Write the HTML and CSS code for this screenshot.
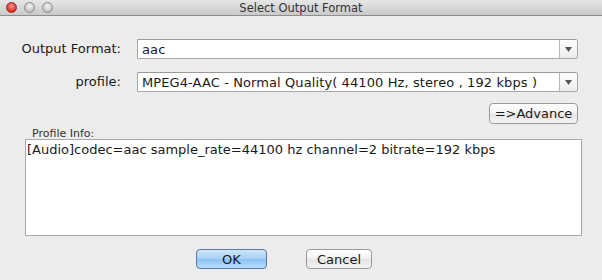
FILE: index.html
```html
<!DOCTYPE html>
<html>
<head>
<meta charset="utf-8">
<link rel="stylesheet" href="styles.css">
</head>
<body>
<div class="window">
  <div class="titlebar">
    <div class="lights">
      <span class="light red"></span>
      <span class="light grey"></span>
      <span class="light grey"></span>
    </div>
    <div class="title">Select Output Format</div>
  </div>
  <div class="content">
    <div class="form">
      <label class="label">Output Format:</label>
      <div class="combo"><span class="combo-text">aac</span><span class="combo-btn"><svg width="7" height="5" viewBox="0 0 7 5"><path d="M0 0 L7 0 L3.5 5 Z" fill="#555"/></svg></span></div>
      <label class="label">profile:</label>
      <div class="combo"><span class="combo-text">MPEG4-AAC - Normal Quality( 44100 Hz, stereo , 192 kbps )</span><span class="combo-btn"><svg width="7" height="5" viewBox="0 0 7 5"><path d="M0 0 L7 0 L3.5 5 Z" fill="#555"/></svg></span></div>
    </div>
    <div class="advance-row"><button class="btn advance">=&gt;Advance</button></div>
    <div class="info-label">Profile Info:</div>
    <div class="info">[Audio]codec=aac sample_rate=44100 hz channel=2 bitrate=192 kbps</div>
    <div class="actions">
      <button class="btn ok">OK</button>
      <button class="btn cancel">Cancel</button>
    </div>
  </div>
</div>
</body>
</html>
```
FILE: styles.css
```css
html, body {
  margin: 0;
  padding: 0;
}
body {
  width: 602px;
  height: 280px;
  overflow: hidden;
  background: #ececec;
  font-family: "DejaVu Sans", "Liberation Sans", sans-serif;
  color: #1a1a1a;
}
.window {
  width: 602px;
  height: 280px;
  display: flex;
  flex-direction: column;
}
.titlebar {
  height: 15px;
  border-bottom: 1px solid #8e8e8e;
  background: linear-gradient(#e6e6e6, #c9c9c9);
  display: flex;
  align-items: center;
  position: relative;
}
.lights {
  display: flex;
  gap: 7px;
  padding-left: 6px;
}
.light {
  width: 11px;
  height: 11px;
  border-radius: 50%;
  box-sizing: border-box;
}
.light.red {
  background: radial-gradient(circle at 50% 35%, #ff9a94, #e0302a 65%, #b01a16);
  border: 1px solid #9a2a24;
}
.light.grey {
  background: radial-gradient(circle at 50% 35%, #f4f4f4, #c8c8c8 65%, #a8a8a8);
  border: 1px solid #8a8a8a;
}
.title {
  position: absolute;
  left: 0;
  right: 0;
  top: 1px;
  text-align: center;
  font-size: 11.5px;
  color: #333;
}
.content {
  padding-top: 23px;
  display: flex;
  flex-direction: column;
}
.form {
  display: grid;
  grid-template-columns: 121px 1fr;
  column-gap: 16px;
  row-gap: 13px;
  padding-right: 24px;
}
.label {
  text-align: right;
  font-size: 13px;
  line-height: 20px;
  color: #1a1a1a;
}
.combo {
  height: 20px;
  box-sizing: border-box;
  border: 1px solid #a8a8a8;
  border-top-color: #9a9a9a;
  background: #fff;
  display: flex;
  align-items: center;
  border-radius: 1px 3px 3px 1px;
}
.combo-text {
  flex: 1;
  padding-left: 4px;
  font-size: 13px;
  letter-spacing: 0.1px;
  white-space: nowrap;
  overflow: hidden;
}
.combo-btn {
  width: 17px;
  height: 100%;
  border-left: 1px solid #b8b8b8;
  background: linear-gradient(#ffffff, #ececec);
  display: flex;
  align-items: center;
  justify-content: center;
  border-radius: 0 3px 3px 0;
}
.advance-row {
  display: flex;
  justify-content: flex-end;
  padding-right: 24px;
  margin-top: 11px;
}
.btn {
  font-family: "DejaVu Sans", "Liberation Sans", sans-serif;
  font-size: 13px;
  color: #1a1a1a;
  border: 1px solid #9a9a9a;
  border-radius: 4px;
  background: linear-gradient(#ffffff, #f2f2f2 50%, #e4e4e4 51%, #f4f4f4);
  padding: 0;
  box-sizing: border-box;
  height: 21px;
}
.advance {
  width: 89px;
}
.info-label {
  margin-top: 4px;
  padding-left: 32px;
  font-size: 11px;
  line-height: 11px;
  color: #333;
}
.info {
  margin: 0 20px 0 25px;
  height: 97px;
  box-sizing: border-box;
  border: 1px solid #a9a9a9;
  background: #fff;
  font-size: 13px;
  padding: 2px 1px;
  white-space: nowrap;
}
.actions {
  display: flex;
  gap: 39px;
  padding-left: 196px;
  margin-top: 13px;
}
.ok {
  width: 71px;
  height: 20px;
  border-color: #5b78a0;
  background: linear-gradient(#cfe6fb, #a7d0f6 50%, #8cc1f1 51%, #b9dcfb);
}
.cancel {
  width: 66px;
  height: 20px;
}
```
